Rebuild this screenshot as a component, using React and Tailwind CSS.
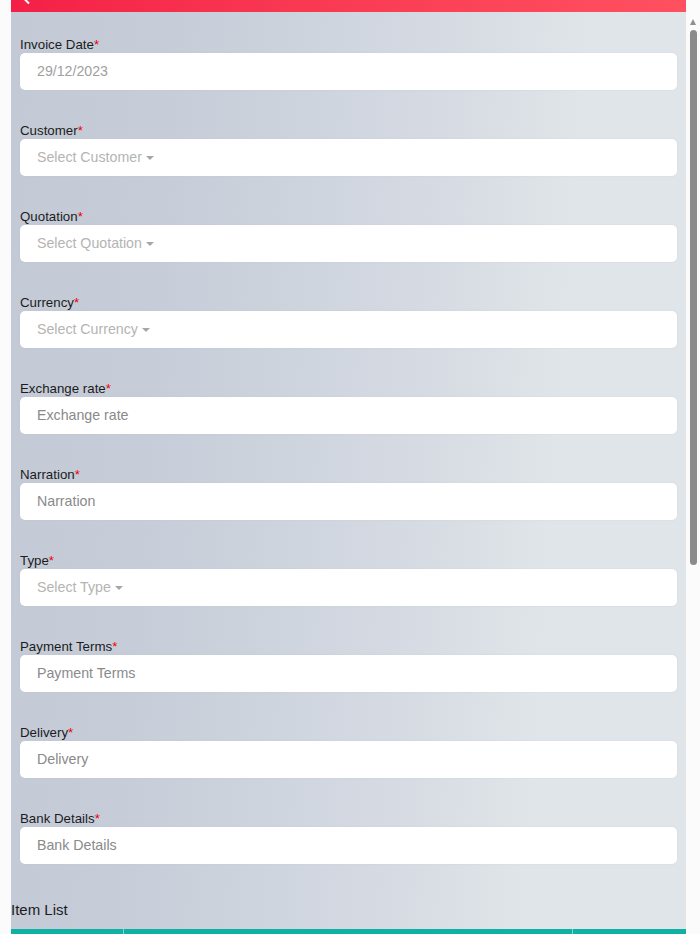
const fields = [
  { label: "Invoice Date", value: "29/12/2023", kind: "date" },
  { label: "Customer", value: "Select Customer", kind: "select" },
  { label: "Quotation", value: "Select Quotation", kind: "select" },
  { label: "Currency", value: "Select Currency", kind: "select" },
  { label: "Exchange rate", value: "Exchange rate", kind: "input" },
  { label: "Narration", value: "Narration", kind: "input" },
  { label: "Type", value: "Select Type", kind: "select" },
  { label: "Payment Terms", value: "Payment Terms", kind: "input" },
  { label: "Delivery", value: "Delivery", kind: "input" },
  { label: "Bank Details", value: "Bank Details", kind: "input" },
];

const Field = ({ label, value, kind }) => {
  const color =
    kind === "input" ? "text-[#8a8a8a]" : kind === "date" ? "text-[#a0a0a0]" : "text-[#b4b4b4]";

  return (
    <div className="h-[86px]">
      <label className="block h-[15px] text-[13.3px] leading-[15px] text-[#1c1c1c]">
        {label}
        <span className="text-[#f00000]">*</span>
      </label>
      <div
        className={`mt-px flex h-[37px] items-center rounded-[5px] bg-white pl-[17px] text-[14.2px] shadow-[0_0_2px_rgba(180,188,200,0.35)] ${color}`}
      >
        {value}
        {kind === "select" && (
          <span className="ml-1 mt-px h-0 w-0 border-x-[4.5px] border-t-4 border-x-transparent border-t-[#a6a6a6]" />
        )}
      </div>
    </div>
  );
};

const Scrollbar = () => (
  <div className="flex h-[934px] w-[14px] shrink-0 flex-col items-center bg-[#fbfbfb] pt-[19px]">
    <span className="h-0 w-0 border-x-[3.5px] border-b-[6px] border-x-transparent border-b-[#8f8f8f]" />
    <div className="mt-[5px] h-[535px] w-[7px] rounded-full bg-[#8b8b8b]" />
  </div>
);

export default function App() {
  return (
    <div className="flex h-[934px] w-[700px] overflow-hidden bg-[#fbfbfb] pl-[11px] font-['Liberation_Sans',Arial,sans-serif]">
      <main className="flex h-[934px] w-[675px] shrink-0 flex-col overflow-hidden bg-[linear-gradient(94deg,#c3cad6_0%,#c6cdd8_22%,#d4d9e2_56%,#e0e5e9_78%)]">
        <header className="h-3 shrink-0 overflow-hidden bg-gradient-to-r from-[#f41f47] to-[#ff5060] pl-[12px]">
          <svg width="10" height="6" viewBox="0 0 10 6" className="block">
            <path d="M1.5 -1 6 3.5" fill="none" stroke="#fff" strokeWidth="2" />
          </svg>
        </header>
        <form className="shrink-0 px-[9px] pt-[25px]">
          {fields.map((field) => (
            <Field key={field.label} {...field} />
          ))}
        </form>
        <h2 className="mt-[3px] h-[20px] shrink-0 text-[15px] leading-[20px] text-[#1c1c1c]">Item List</h2>
        <div className="mt-[9px] grid h-[20px] shrink-0 grid-cols-[113px_449px_1fr] bg-[#0eb1a4]">
          <div className="border-r border-[#7fd6cf]" />
          <div className="border-r border-[#7fd6cf]" />
          <div />
        </div>
      </main>
      <Scrollbar />
    </div>
  );
}
